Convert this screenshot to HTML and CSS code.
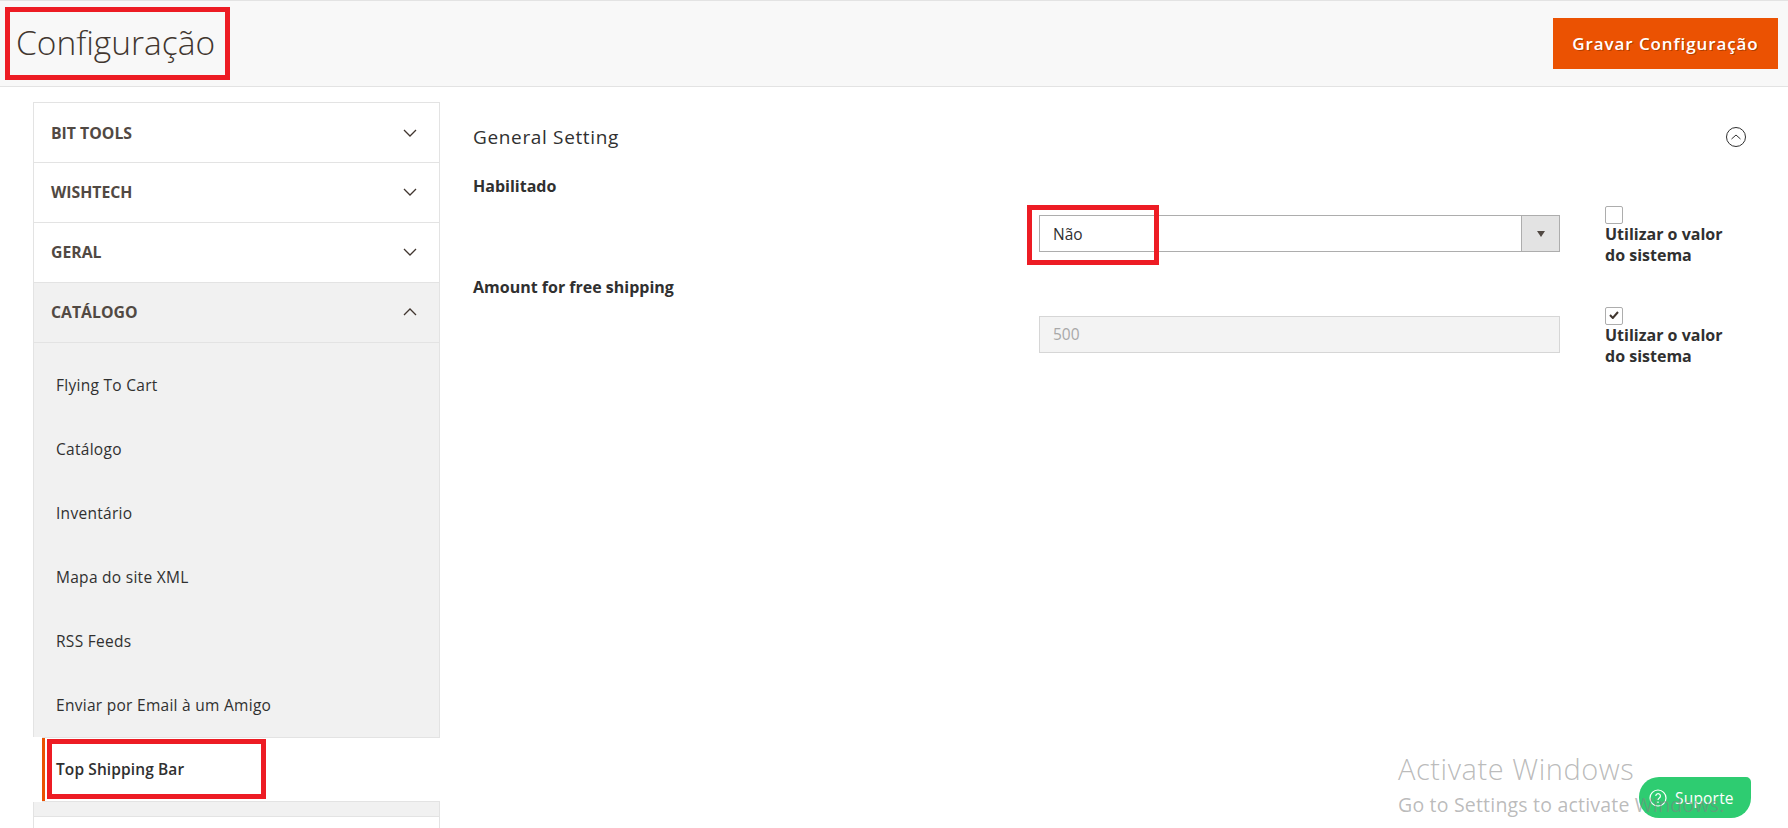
FILE: index.html
```html
<!DOCTYPE html>
<html lang="pt">
<head>
<meta charset="utf-8">
<title>Configuração</title>
<link rel="stylesheet" href="styles.css">
</head>
<body>
<div class="page">
  <header class="page-header">
    <h1 class="page-title">Configuração</h1>
    <button class="save-btn" type="button">Gravar Configuração</button>
  </header>
  <div class="columns">
    <nav class="sidebar">
      <div class="nav-head">BIT TOOLS<svg class="chev" viewBox="0 0 14 8"><path d="M1 1l6 6 6-6"/></svg></div>
      <div class="nav-head">WISHTECH<svg class="chev" viewBox="0 0 14 8"><path d="M1 1l6 6 6-6"/></svg></div>
      <div class="nav-head">GERAL<svg class="chev" viewBox="0 0 14 8"><path d="M1 1l6 6 6-6"/></svg></div>
      <div class="nav-head nav-head-open">CATÁLOGO<svg class="chev" viewBox="0 0 14 8"><path d="M1 7l6-6 6 6"/></svg></div>
      <ul class="sub-list">
        <li class="sub-item">Flying To Cart</li>
        <li class="sub-item">Catálogo</li>
        <li class="sub-item">Inventário</li>
        <li class="sub-item">Mapa do site XML</li>
        <li class="sub-item">RSS Feeds</li>
        <li class="sub-item">Enviar por Email à um Amigo</li>
        <li class="sub-item sub-item-active">Top Shipping Bar</li>
      </ul>
      <div class="nav-tail"></div>
      <div class="nav-next"></div>
    </nav>
    <main class="content">
      <div class="section-head">
        <h2 class="section-title">General Setting</h2>
        <svg class="collapse" viewBox="0 0 20 20"><circle cx="10" cy="10" r="9.500"/><path d="M5.500 12l4.500-4 4.500 4"/></svg>
      </div>
      <div class="field">
        <div class="field-label">Habilitado</div>
        <div class="field-row field-row-first">
          <div class="select"><span class="select-value">Não</span><span class="select-btn"><span class="caret"></span></span></div>
          <div class="inherit">
            <span class="check"></span>
            <span class="inherit-label">Utilizar o valor<br>do sistema</span>
          </div>
        </div>
      </div>
      <div class="field">
        <div class="field-label">Amount for free shipping</div>
        <div class="field-row">
          <div class="input-off">500</div>
          <div class="inherit">
            <span class="check"><svg class="tick" viewBox="0 0 10 8"><path d="M1 4l2.800 3L9 1"/></svg></span>
            <span class="inherit-label">Utilizar o valor<br>do sistema</span>
          </div>
        </div>
      </div>
    </main>
  </div>
  <div class="mark mark-title"></div>
  <div class="mark mark-select"></div>
  <div class="mark mark-nav"></div>
  <div class="support">
    <svg class="support-icon" viewBox="0 0 18 18"><circle cx="9" cy="9" r="8"/><path d="M6.800 7a2.300 2.300 0 1 1 3.500 2c-.9.600-1.300 1-1.300 2"/><path d="M9 12.500v1.500"/></svg>
    <span>Suporte</span>
  </div>
  <div class="watermark">
    <div class="wm-big">Activate Windows</div>
    <div class="wm-small">Go to Settings to activate Windows.</div>
  </div>
</div>
</body>
</html>
```

FILE: styles.css
```css
* { box-sizing: border-box; }
html, body { margin: 0; padding: 0; }
body {
  font-family: "Open Sans", "Noto Sans", sans-serif;
  color: #303030;
  background: #fff;
}
.page {
  position: relative;
  width: 1788px;
  height: 828px;
  overflow: hidden;
}
.page-header {
  height: 87px;
  background: #f8f8f8;
  border-top: 1px solid #e3e3e3;
  border-bottom: 1px solid #e3e3e3;
  display: flex;
  justify-content: space-between;
  align-items: flex-start;
  padding: 17px 10px 0 16px;
}
.page-title {
  margin: 0;
  font-size: 33.500px;
  line-height: 48px;
  font-weight: 300;
  color: #41362f;
}
.save-btn {
  width: 225px;
  height: 51px;
  border: 0;
  background: #eb5202;
  color: #fff;
  font-family: inherit;
  font-size: 17px;
  font-weight: 600;
  letter-spacing: .9px;
  text-shadow: 1px 1px 0 rgba(0,0,0,.25);
  padding: 0;
}
.columns {
  display: flex;
  padding: 15px 0 0 33px;
}
.sidebar {
  width: 407px;
  flex: none;
  border-top: 1px solid #e3e3e3;
}
.nav-head {
  height: 60px;
  display: flex;
  align-items: center;
  justify-content: space-between;
  padding: 0 22px 0 17px;
  border-left: 1px solid #e3e3e3;
  border-right: 1px solid #e3e3e3;
  border-bottom: 1px solid #e3e3e3;
  font-size: 15.800px;
  font-weight: 700;
  color: #514943;
}
.nav-head + .nav-head { padding-bottom: 2px; }
.nav-head-open { background: #f1f1f1; }
.chev {
  width: 14px;
  height: 8px;
  fill: none;
  stroke: #41362f;
  stroke-width: 1.300;
}
.sub-list {
  list-style: none;
  margin: 0;
  padding: 0;
}
.sub-item {
  height: 64px;
  display: flex;
  align-items: center;
  padding-left: 22px;
  background: #f1f1f1;
  border-left: 1px solid #e3e3e3;
  border-right: 1px solid #e3e3e3;
  font-size: 15.500px;
  letter-spacing: .28px;
  color: #303030;
}
.sub-item:first-child {
  height: 74px;
  padding-top: 10px;
}
.sub-item-active {
  height: 65px;
  background: #fff;
  font-weight: 600;
  letter-spacing: .1px;
  border-left: 0;
  border-right: 0;
  border-top: 1px solid #e3e3e3;
  border-bottom: 1px solid #e3e3e3;
  padding: 0 0 2px 14px;
  margin-left: 9px;
  box-shadow: inset 3px 0 0 #eb5202;
}
.nav-tail {
  height: 14px;
  background: #f1f1f1;
  border-left: 1px solid #e3e3e3;
  border-right: 1px solid #e3e3e3;
}
.nav-next {
  height: 30px;
  border: 1px solid #e3e3e3;
  border-bottom: 0;
}
.content {
  flex: 1;
  padding: 15px 17px 0 33px;
  min-width: 0;
}
.section-head {
  display: flex;
  justify-content: space-between;
  align-items: center;
  height: 40px;
  margin-bottom: 19px;
  padding-right: 25px;
}
.section-title {
  margin: 0;
  font-size: 19px;
  font-weight: 500;
  letter-spacing: .65px;
  color: #303030;
}
.collapse {
  width: 20px;
  height: 20px;
  fill: none;
  stroke: #303030;
  stroke-width: 1;
}
.field-label {
  font-size: 16px;
  font-weight: 700;
  line-height: 20px;
  color: #303030;
}
.field-row {
  display: flex;
  align-items: flex-start;
  padding: 10px 0 0 566px;
  gap: 45px;
}
.field-row-first { height: 81px; }
.select {
  width: 521px;
  height: 37px;
  display: flex;
  justify-content: space-between;
  border: 1px solid #adadad;
  background: #fff;
  margin-top: 9px;
  font-size: 15.500px;
  color: #303030;
}
.select-value {
  padding-left: 13px;
  line-height: 37px;
}
.select-btn {
  width: 38px;
  background: #e3e3e3;
  border-left: 1px solid #adadad;
  display: flex;
  align-items: center;
  justify-content: center;
}
.caret {
  width: 0;
  height: 0;
  border-left: 4.500px solid transparent;
  border-right: 4.500px solid transparent;
  border-top: 6px solid #514943;
}
.input-off {
  width: 521px;
  height: 37px;
  border: 1px solid #d6d6d6;
  background: #f3f3f3;
  margin-top: 9px;
  padding-left: 13px;
  line-height: 35px;
  font-size: 15.500px;
  color: #a8a8a8;
}
.inherit {
  display: flex;
  flex-direction: column;
  align-items: flex-start;
}
.check {
  width: 18px;
  height: 18px;
  border: 1px solid #adadad;
  border-radius: 2px;
  background: #fff;
  display: flex;
  align-items: flex-start;
  justify-content: center;
  padding-top: 3px;
}
.tick {
  width: 10px;
  height: 8px;
  fill: none;
  stroke: #41362f;
  stroke-width: 2;
}
.inherit-label {
  font-size: 16px;
  font-weight: 700;
  line-height: 21px;
  color: #303030;
}
.mark {
  position: absolute;
  border: 5px solid #ed1c24;
}
.mark-title { left: 5px; top: 7px; width: 225px; height: 73px; }
.mark-select { left: 1027px; top: 205px; width: 132px; height: 60px; }
.mark-nav { left: 47px; top: 739px; width: 219px; height: 60px; }
.support {
  position: absolute;
  z-index: 1;
  left: 1639px;
  top: 777px;
  width: 112px;
  height: 41px;
  background: #2ecc71;
  border-radius: 20px 5px 20px 20px;
  display: flex;
  align-items: center;
  gap: 8px;
  padding-left: 10px;
  color: #fff;
  font-size: 15.500px;
  letter-spacing: .2px;
}
.support-icon {
  width: 18px;
  height: 18px;
  fill: none;
  stroke: #fff;
  stroke-width: 1.200;
}
.watermark {
  position: absolute;
  z-index: 2;
  left: 1398px;
  top: 751px;
  color: rgba(130,130,130,.55);
  white-space: nowrap;
}
.wm-big { font-size: 29px; font-weight: 300; line-height: 36px; letter-spacing: .55px; }
.wm-small { font-size: 19.500px; font-weight: 400; line-height: 36px; letter-spacing: .2px; }
```
